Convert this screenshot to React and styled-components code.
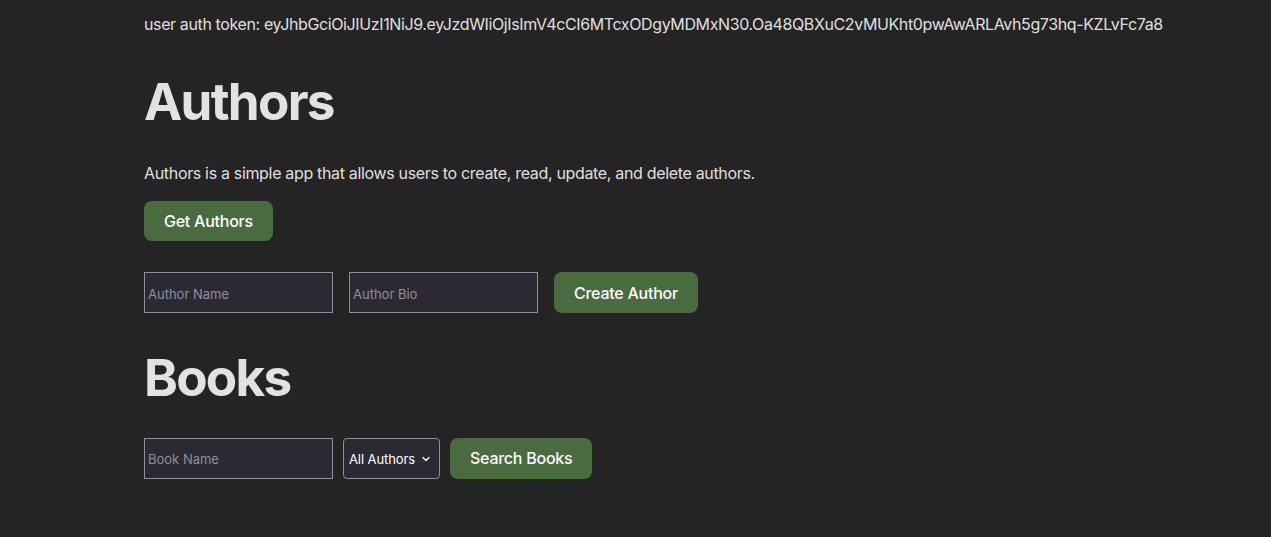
import React from "react";
import styled, { createGlobalStyle } from "styled-components";

const GlobalStyle = createGlobalStyle`
  body {
    margin: 0;
    background: #242424;
    color: rgba(255, 255, 255, 0.87);
    font-family: Inter, "Noto Sans", sans-serif;
    font-size: 16px;
    line-height: 24px;
    letter-spacing: -0.33px;
  }
`;

const Page = styled.main`
  padding: 12px 144px 40px;
`;

const Token = styled.p`
  margin: 0;
  white-space: nowrap;
  letter-spacing: -0.38px;
`;

const Heading = styled.h1`
  margin: ${(p) => p.$top}px 0 0;
  font-size: 51.2px;
  line-height: 1.1;
  font-weight: 700;
  letter-spacing: -1.7px;
  color: rgba(255, 255, 255, 0.87);
`;

const Intro = styled.p`
  margin: 32px 0 0;
`;

const Row = styled.div`
  display: flex;
  align-items: center;
  gap: ${(p) => p.$gap}px;
  margin-top: ${(p) => p.$top}px;
`;

const Button = styled.button`
  height: ${(p) => p.$h || 41}px;
  padding: 0 20px;
  border: none;
  border-radius: 8px;
  background: #4a6b3f;
  color: #fff;
  font-family: Inter, "Noto Sans", sans-serif;
  font-size: 16px;
  font-weight: 500;
  letter-spacing: -0.25px;
  cursor: pointer;
  &:hover {
    background: #557a49;
  }
`;

const Input = styled.input`
  box-sizing: border-box;
  width: 189px;
  height: 41px;
  padding: 2px 3px 0;
  background: #2b2a33;
  border: 1px solid #8f8f9d;
  border-radius: 0;
  color: #fff;
  font-family: Inter, "Noto Sans", sans-serif;
  font-size: 13px;
  letter-spacing: 0;
  &::placeholder {
    color: #8f8f9d;
  }
`;

const SelectBox = styled.div`
  box-sizing: border-box;
  display: flex;
  align-items: center;
  gap: 7px;
  width: 97px;
  height: 41px;
  padding: 2px 6px 0 5px;
  background: #2b2a33;
  border: 1px solid #8f8f9d;
  border-radius: 4px;
  color: #fff;
  font-size: 13px;
  letter-spacing: -0.1px;
  cursor: pointer;
`;

const Chevron = () => (
  <svg width="8" height="6" viewBox="0 0 8 6" fill="none">
    <path d="M1 1.5 L4 4.5 L7 1.5" stroke="#fff" strokeWidth="1.3" strokeLinecap="round" strokeLinejoin="round" />
  </svg>
);

export default function App() {
  return (
    <>
      <GlobalStyle />
      <Page>
        <Token>
          user auth token: eyJhbGciOiJIUzI1NiJ9.eyJzdWIiOjIsImV4cCI6MTcxODgyMDMxN30.Oa48QBXuC2vMUKht0pwAwARLAvh5g73hq-KZLvFc7a8
        </Token>
        <Heading $top={37}>Authors</Heading>
        <Intro>Authors is a simple app that allows users to create, read, update, and delete authors.</Intro>
        <Row $top={16} $gap={16}>
          <Button $h={40}>Get Authors</Button>
        </Row>
        <Row $top={31} $gap={16}>
          <Input placeholder="Author Name" />
          <Input placeholder="Author Bio" />
          <Button>Create Author</Button>
        </Row>
        <Heading $top={36}>Books</Heading>
        <Row $top={32} $gap={10}>
          <Input placeholder="Book Name" />
          <SelectBox>
            All Authors
            <Chevron />
          </SelectBox>
          <Button>Search Books</Button>
        </Row>
      </Page>
    </>
  );
}
